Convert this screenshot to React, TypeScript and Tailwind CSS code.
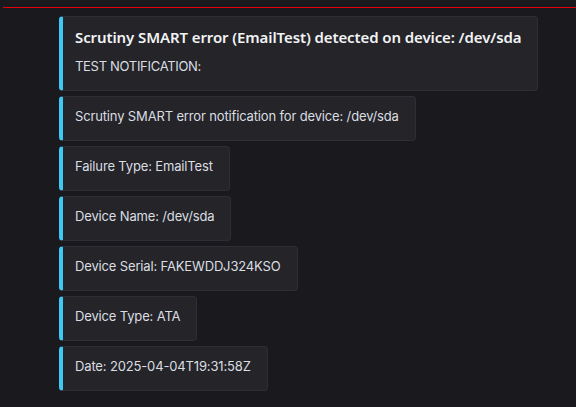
const fields = [
  'Scrutiny SMART error notification for device: /dev/sda',
  'Failure Type: EmailTest',
  'Device Name: /dev/sda',
  'Device Serial: FAKEWDDJ324KSO',
  'Device Type: ATA',
  'Date: 2025-04-04T19:31:58Z',
];

function Embed({ children }: { children: React.ReactNode }) {
  return (
    <div className="w-fit rounded-[4px] border border-[#2e2e34] border-l-4 border-l-[#3ec9f4] bg-[#242429] pl-3 pr-4">
      {children}
    </div>
  );
}

export default function App() {
  return (
    <div className="min-h-[407px] bg-[#1a1a1e] font-['Inter',sans-serif] text-[#dbdee1]">
      <div className="pt-[7px] pl-[3px]">
        <div className="h-px bg-red-600" />
      </div>
      <div className="flex flex-col gap-[5px] pl-[59px] pt-2">
        <Embed>
          <div className="pt-[10px] pb-[15px]">
            <div className="font-['Noto_Sans',sans-serif] text-[15px] leading-5 font-semibold tracking-[-0.1px] text-[#f2f3f5]">
              Scrutiny SMART error (EmailTest) detected on device: /dev/sda
            </div>
            <div className="mt-[10px] text-[13px] leading-[18px] tracking-[-0.3px]">TEST NOTIFICATION:</div>
          </div>
        </Embed>
        {fields.map((f) => (
          <Embed key={f}>
            <div className="pt-[10px] pb-[15px] text-[13px] leading-[18px] tracking-[-0.15px]">{f}</div>
          </Embed>
        ))}
      </div>
    </div>
  );
}
